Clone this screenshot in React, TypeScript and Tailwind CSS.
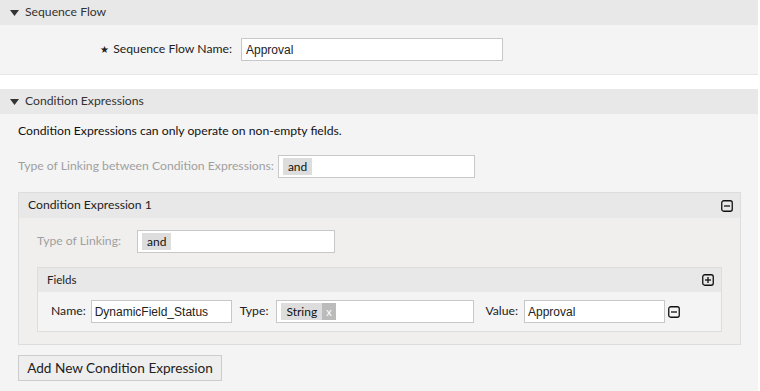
import React from 'react';

function Caret() {
    return (
        <svg width="9" height="6" viewBox="0 0 9 6" className="mr-[6px]">
            <path d="M0 0 H9 L4.5 6 Z" fill="#333" />
        </svg>
    );
}

function BoxIcon({ plus }: { plus?: boolean }) {
    return (
        <svg width="12" height="12" viewBox="0 0 12 12">
            <rect x="0.75" y="0.75" width="10.5" height="10.5" rx="2" fill="none" stroke="#111" strokeWidth="1.3" />
            <path d="M3 6 H9" stroke="#111" strokeWidth="1.3" />
            {plus && <path d="M6 3 V9" stroke="#111" strokeWidth="1.3" />}
        </svg>
    );
}

function Chip({ children }: { children: React.ReactNode }) {
    return <span className="bg-[#dddddd] px-[5px] leading-[17px] text-[12px] text-[#111]">{children}</span>;
}

function App() {
    return (
        <div className="w-[760px] h-[391px] overflow-hidden bg-white font-['Lato','Open_Sans',sans-serif] text-[12.2px] text-[#222]">
            {/* Sequence Flow */}
            <div className="w-[758px] bg-[#f4f4f4] border-b border-[#e6e6e6]">
                <div className="h-[25px] bg-[#e8e8e8] flex items-center pl-[10px] text-[#333]">
                    <Caret />
                    Sequence Flow
                </div>
                <div className="h-[49px] flex items-center">
                    <div className="w-[232px] text-right flex items-center justify-end text-[#222]">
                        <span className="text-[10px] mr-[4px]">★</span>
                        Sequence Flow Name:
                    </div>
                    <input
                        readOnly
                        value="Approval"
                        className="ml-[9px] w-[262px] h-[23px] bg-white border border-[#c8c8c8] px-[4px] text-[12px] font-['Liberation_Sans',Arial,sans-serif] text-[#222] outline-none"
                    />
                </div>
            </div>

            {/* Condition Expressions */}
            <div className="w-[758px] mt-[14px] bg-[#f4f4f4] h-[302px]">
                <div className="h-[25px] bg-[#e8e8e8] flex items-center pl-[10px] text-[#333]">
                    <Caret />
                    Condition Expressions
                </div>
                <div className="px-[18px]">
                    <p className="pt-[8px] h-[34px] text-[#111]">Condition Expressions can only operate on non-empty fields.</p>
                    <div className="flex items-center h-[24px] mt-[6px]">
                        <span className="text-[#a0a0a0]">Type of Linking between Condition Expressions:</span>
                        <div className="ml-[4px] w-[197px] h-[23px] bg-white border border-[#c8c8c8] flex items-center px-[4px]">
                            <Chip>and</Chip>
                        </div>
                    </div>

                    <div className="mt-[14px] w-[723px] border border-[#dddddd] bg-[#f0efee]">
                        <div className="h-[25px] bg-[#e8e8e8] flex items-center justify-between pl-[9px] pr-[7px] text-[#222]">
                            <span>Condition Expression 1</span>
                            <BoxIcon />
                        </div>
                        <div className="px-[18px] pb-[12px]">
                            <div className="flex items-center h-[23px] mt-[12px]">
                                <span className="w-[100px] text-[#a0a0a0]">Type of Linking:</span>
                                <div className="w-[198px] h-[23px] bg-white border border-[#c8c8c8] flex items-center px-[4px]">
                                    <Chip>and</Chip>
                                </div>
                            </div>
                            <div className="mt-[14px] w-[685px] border border-[#dddddd] bg-[#f4f4f4]">
                                <div className="h-[24px] bg-[#e8e8e8] flex items-center justify-between pl-[9px] pr-[7px] text-[11.5px] text-[#222]">
                                    <span>Fields</span>
                                    <BoxIcon plus />
                                </div>
                                <div className="flex items-center h-[39px] pl-[13px] text-[#222]">
                                    <span>Name:</span>
                                    <input
                                        readOnly
                                        value="DynamicField_Status"
                                        className="ml-[5px] w-[141px] h-[23px] bg-white border border-[#c8c8c8] px-[3px] text-[12px] font-['Liberation_Sans',Arial,sans-serif] text-[#222] outline-none"
                                    />
                                    <span className="ml-[8px]">Type:</span>
                                    <div className="ml-[8px] w-[198px] h-[23px] bg-white border border-[#c8c8c8] flex items-center px-[4px]">
                                        <Chip>String</Chip>
                                        <span className="bg-[#bbbbbb] text-white text-[11px] leading-[17px] px-[4px]">x</span>
                                    </div>
                                    <span className="ml-[11px]">Value:</span>
                                    <input
                                        readOnly
                                        value="Approval"
                                        className="ml-[6px] w-[141px] h-[23px] bg-white border border-[#c8c8c8] px-[3px] text-[12px] font-['Liberation_Sans',Arial,sans-serif] text-[#222] outline-none"
                                    />
                                    <span className="ml-[3px] flex">
                                        <BoxIcon />
                                    </span>
                                </div>
                            </div>
                        </div>
                    </div>

                    <button className="mt-[10px] h-[26px] w-[204px] bg-[#eeeeee] border border-[#cccccc] text-[#222] text-[13.6px]">
                        Add New Condition Expression
                    </button>
                </div>
            </div>
        </div>
    );
}

export default App;
